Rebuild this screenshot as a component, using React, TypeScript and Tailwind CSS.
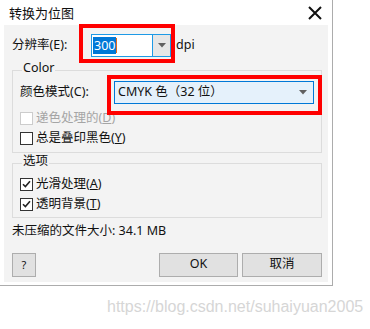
import React from "react";

const font = { fontFamily: "'Noto Sans', 'Noto Sans CJK SC', sans-serif" };

function Check({ checked, disabled }: { checked?: boolean; disabled?: boolean }) {
  return (
    <div
      className={`w-[13px] h-[13px] border bg-white flex items-center justify-center ${
        disabled ? "border-[#cccccc]" : "border-[#333333]"
      }`}
    >
      {checked && (
        <svg width="9" height="8" viewBox="0 0 9 8">
          <path d="M1 4.2 L3.4 6.6 L8 1.2" fill="none" stroke="#222" strokeWidth="1.6" />
        </svg>
      )}
    </div>
  );
}

function Arrow({ color = "#606060" }: { color?: string }) {
  return (
    <svg width="8" height="5" viewBox="0 0 8 5">
      <path d="M0 0 L8 0 L4 4.5 Z" fill={color} />
    </svg>
  );
}

export default function App() {
  return (
    <div className="w-[370px] h-[329px] bg-white relative overflow-hidden text-[12.5px] text-[#111]" style={font}>
      <div className="w-[333px] h-[286px] border-r border-b border-[#acacac] bg-white flex flex-col">
        <div className="h-[25px] flex items-center justify-between pl-[9px] pr-[10px]">
          <span className="text-[13px] leading-none pt-[1px]">转换为位图</span>
          <svg width="14" height="14" viewBox="0 0 14 14">
            <path d="M1 1 L13 13 M13 1 L1 13" stroke="#111" strokeWidth="2" />
          </svg>
        </div>
        <div className="flex-1 ml-[4px] mr-[4px] mb-[3px] bg-[#f3f3f3] flex flex-col px-[7px]">
          {/* resolution row */}
          <div className="flex items-center mt-[9px] h-[23px]">
            <span className="w-[80px] pl-[1px] leading-none">分辨率(E):</span>
            <div className="w-[80px] h-[23px] border border-[#1e9ae6] bg-white flex">
              <div className="flex-1 flex items-center pl-[1px]">
                <span className="bg-[#0078d7] text-white px-[1px] leading-[17px]">300</span>
                <span className="w-[1px] h-[15px] bg-[#e36a1c]"></span>
              </div>
              <div className="w-[18px] bg-[#e6e6e6] border-l border-[#1e9ae6] flex items-center justify-center">
                <Arrow />
              </div>
            </div>
            <span className="ml-[5px] leading-none">dpi</span>
          </div>

          {/* Color group */}
          <div className="relative mt-[13px] ml-[1px] w-[310px] h-[83px] border border-[#dcdcdc]">
            <span className="absolute left-[9px] top-[-9px] px-[1px] bg-[#f3f3f3] leading-none">Color</span>
            <div className="flex items-center mt-[10px] ml-[7px] h-[23px]">
              <span className="w-[94px] leading-none">颜色模式(C):</span>
              <div className="w-[200px] h-[23px] border border-[#0078d7] bg-[#e5f1fb] flex items-center justify-between pl-[3px] pr-[6px]">
                <span className="leading-none">CMYK 色（32 位）</span>
                <Arrow />
              </div>
            </div>
            <div className="flex items-center ml-[7px] mt-[7px] gap-[3px] h-[14px]">
              <Check disabled />
              <span className="text-[#a5a5a5] leading-none">
                递色处理的(<span className="underline">D</span>)
              </span>
            </div>
            <div className="flex items-center ml-[7px] mt-[6px] gap-[3px] h-[14px]">
              <Check />
              <span className="leading-none">
                总是叠印黑色(<span className="underline">Y</span>)
              </span>
            </div>
          </div>

          {/* Options group */}
          <div className="relative mt-[10px] ml-[1px] w-[310px] h-[55px] border border-[#dcdcdc]">
            <span className="absolute left-[9px] top-[-9px] px-[1px] bg-[#f3f3f3] leading-none">选项</span>
            <div className="flex items-center ml-[7px] mt-[13px] gap-[3px] h-[14px]">
              <Check checked />
              <span className="leading-none">
                光滑处理(<span className="underline">A</span>)
              </span>
            </div>
            <div className="flex items-center ml-[7px] mt-[6px] gap-[3px] h-[14px]">
              <Check checked />
              <span className="leading-none">
                透明背景(<span className="underline">T</span>)
              </span>
            </div>
          </div>

          <div className="mt-[7px] ml-[1px] leading-none">未压缩的文件大小: 34.1 MB</div>

          <div className="flex mt-[15px] ml-[1px] w-[310px]">
            <button className="w-[24px] h-[24px] border border-[#adadad] bg-[#e1e1e1] text-[11px] leading-none">?</button>
            <div className="flex-1" />
            <button className="w-[79px] h-[24px] border border-[#adadad] bg-[#e1e1e1] leading-none">OK</button>
            <button className="w-[80px] h-[24px] ml-[4px] border border-[#adadad] bg-[#e1e1e1] leading-none">取消</button>
          </div>
        </div>
      </div>

      <div
        className="mt-[13px] ml-[107px] text-[16px] leading-none text-[#d6d6d6]"
        style={{ fontFamily: "'Liberation Sans', Arial, sans-serif" }}
      >
        https://blog.csdn.net/suhaiyuan2005
      </div>

      {/* red annotation boxes */}
      <div className="absolute left-[79px] top-[24px] w-[96px] h-[39px] border-4 border-[#ff0000]" />
      <div className="absolute left-[107px] top-[75px] w-[215px] h-[40px] border-4 border-[#ff0000]" />
    </div>
  );
}
